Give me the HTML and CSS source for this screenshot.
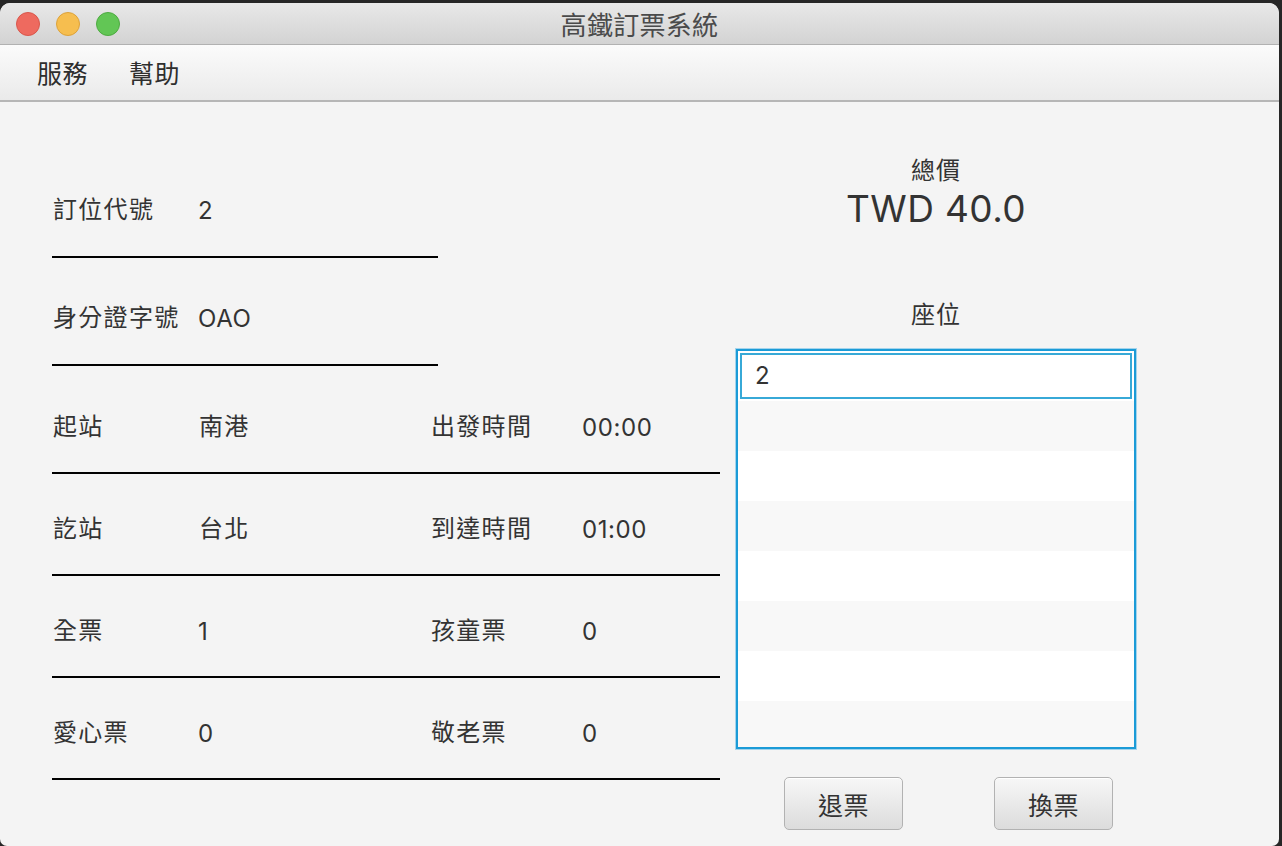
FILE: index.html
```html
<!DOCTYPE html>
<html lang="zh-Hant">
<head>
<meta charset="utf-8">
<title>高鐵訂票系統</title>
<link rel="stylesheet" href="styles.css">
</head>
<body>
<div class="window">
  <header class="titlebar">
    <div class="lights">
      <span class="light red"></span>
      <span class="light yellow"></span>
      <span class="light green"></span>
    </div>
    <div class="title">高鐵訂票系統</div>
    <div></div>
  </header>
  <nav class="menubar">
    <span class="menu-item">服務</span>
    <span class="menu-item">幫助</span>
  </nav>
  <main class="content">
    <section class="details">
      <div class="row short">
        <span class="label">訂位代號</span><span class="value">2</span>
      </div>
      <div class="row short">
        <span class="label">身分證字號</span><span class="value">OAO</span>
      </div>
      <div class="wide-group">
        <div class="row wide">
          <span class="label">起站</span><span class="label">南港</span>
          <span class="label">出發時間</span><span class="value">00:00</span>
        </div>
        <div class="row wide">
          <span class="label">訖站</span><span class="label">台北</span>
          <span class="label">到達時間</span><span class="value">01:00</span>
        </div>
        <div class="row wide">
          <span class="label">全票</span><span class="value">1</span>
          <span class="label">孩童票</span><span class="value">0</span>
        </div>
        <div class="row wide">
          <span class="label">愛心票</span><span class="value">0</span>
          <span class="label">敬老票</span><span class="value">0</span>
        </div>
      </div>
    </section>
    <section class="summary">
      <div class="heading">總價</div>
      <div class="total">TWD 40.0</div>
      <div class="heading seat-heading">座位</div>
      <div class="seat-list">
        <div class="seat-row selected">2</div>
        <div class="seat-row"></div>
        <div class="seat-row"></div>
        <div class="seat-row"></div>
        <div class="seat-row"></div>
        <div class="seat-row"></div>
        <div class="seat-row"></div>
        <div class="seat-row"></div>
      </div>
      <div class="actions">
        <button class="btn">退票</button>
        <button class="btn">換票</button>
      </div>
    </section>
  </main>
</div>
</body>
</html>
```

FILE: styles.css
```css
* { box-sizing: border-box; }

html, body {
  margin: 0;
  padding: 0;
  background: #262626;
  overflow: hidden;
}

body {
  width: 1282px;
  height: 846px;
  padding: 3px 3px 0 0;
  font-family: "Noto Sans CJK TC", "Noto Sans CJK SC", sans-serif;
  color: #333333;
}

.window {
  width: 1279px;
  height: 843px;
  background: #f4f4f4;
  border-radius: 10px 10px 7px 7px;
  overflow: hidden;
  display: flex;
  flex-direction: column;
}

/* title bar */
.titlebar {
  height: 42px;
  flex: none;
  display: grid;
  grid-template-columns: 1fr auto 1fr;
  align-items: center;
  background: linear-gradient(#e8e8e8, #d3d3d3);
  border-bottom: 1px solid #b1b1b1;
}

.lights {
  display: flex;
  gap: 16px;
  padding-left: 16px;
}

.light {
  width: 24px;
  height: 24px;
  border-radius: 50%;
  border: 1px solid rgba(0, 0, 0, 0.12);
}
.light.red { background: #ee6a5f; border-color: #d8574c; }
.light.yellow { background: #f6be4f; border-color: #dca23b; }
.light.green { background: #62c655; border-color: #4eaa41; }

.title {
  font-size: 26px;
  line-height: 30px;
  color: #4b4b4b;
  letter-spacing: 0.3px;
}

/* menu bar */
.menubar {
  height: 57px;
  flex: none;
  display: flex;
  align-items: center;
  gap: 41px;
  padding: 0 0 1px 37px;
  background: linear-gradient(#fbfbfb, #eaeaea);
  border-bottom: 2px solid #b6b6b6;
}

.menu-item {
  font-size: 25px;
  line-height: 30px;
  color: #2e2e2e;
  letter-spacing: 0.5px;
}

/* content */
.content {
  flex: 1;
  display: flex;
}

.details {
  width: 736px;
  flex: none;
  padding: 48px 0 0 52px;
}

.row {
  display: grid;
  grid-template-columns: 146px 232px 152px 1fr;
  align-items: center;
  border-bottom: 2px solid #000;
}

.row.short {
  width: 386px;
  padding: 43px 0 33px;
}

.wide-group {
  margin-top: 6px;
}

.row.wide {
  width: 668px;
  padding: 38px 0 32px;
}

.label {
  font-size: 24px;
  line-height: 30px;
  height: 30px;
  padding-left: 1px;
  letter-spacing: 1.3px;
  white-space: nowrap;
}

.value {
  font-family: "Inter", "Liberation Sans", sans-serif;
  font-size: 24px;
  height: 30px;
  line-height: 35px;
  letter-spacing: 0.6px;
}

/* summary */
.summary {
  width: 400px;
  flex: none;
  display: flex;
  flex-direction: column;
  align-items: center;
  padding-top: 52px;
}

.heading {
  font-size: 24px;
  line-height: 30px;
  letter-spacing: 1px;
}

.total {
  margin-top: 3px;
  font-family: "Inter", "Liberation Sans", sans-serif;
  font-size: 37px;
  line-height: 44px;
  letter-spacing: 0.4px;
}

.seat-heading {
  margin-top: 67px;
}

.seat-list {
  margin-top: 21px;
  width: 400px;
  height: 400px;
  border: 2px solid #1b9bd7;
  box-shadow: 0 0 0 1px #a4d4ec;
  background: #ffffff;
  overflow: hidden;
}

.seat-row {
  height: 50px;
  padding-left: 17px;
  font-family: "Inter", "Liberation Sans", sans-serif;
  font-size: 24px;
  line-height: 50px;
  background: #ffffff;
}

.seat-row:nth-child(even) {
  background: #f8f8f8;
}

.seat-row.selected {
  outline: 2px solid #37a9d7;
  outline-offset: -4px;
}

.actions {
  align-self: stretch;
  display: flex;
  gap: 91px;
  padding-left: 48px;
  margin-top: 28px;
}

.btn {
  width: 119px;
  height: 53px;
  border: 1px solid #b2b2b2;
  border-radius: 5px;
  background: linear-gradient(#f7f7f7, #dcdcdc);
  box-shadow: inset 0 1px 0 #ffffff;
  font-family: "Noto Sans CJK TC", sans-serif;
  font-size: 25px;
  color: #333;
  letter-spacing: 0.5px;
  padding: 0;
}
```
